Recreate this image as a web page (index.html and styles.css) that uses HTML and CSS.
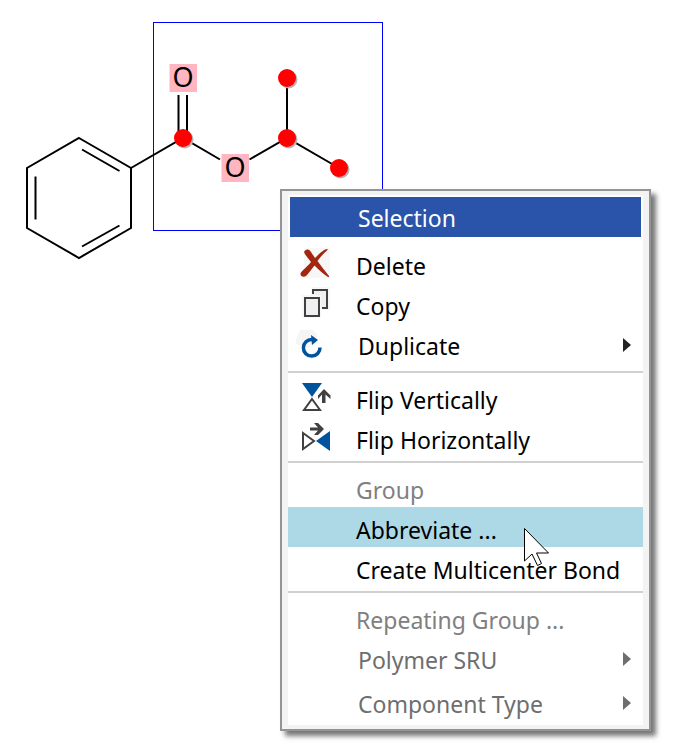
FILE: index.html
```html
<!DOCTYPE html>
<html lang="en">
<head>
<meta charset="utf-8">
<meta name="viewport" content="width=device-width, initial-scale=1">
<title>Structure editor</title>
<link rel="stylesheet" href="styles.css">
</head>
<body>
<main class="canvas">
  <svg class="molecule" width="400" height="270" viewBox="0 0 400 270" role="img" aria-label="Isopropyl benzoate with the ester group selected">
    <rect class="marquee" x="153.500" y="22.500" width="229" height="208"/>
    <g class="bonds">
      <path d="M79 138L131 168V228L79 258L27 228V168Z"/>
      <path d="M82 149.500L119.500 171M119.500 225.500L82 246.500M35.500 176.500V219.500"/>
      <path d="M131 168L183 138L220 159.500M249.500 159.500L287 138L339 168M287 138V78M178.500 95V138M187 95V138"/>
    </g>
    <g class="atom-box">
      <rect x="169.500" y="64" width="27.500" height="28"/>
      <rect x="221.500" y="154" width="27.500" height="28"/>
    </g>
    <g class="atom-label">
      <text x="183" y="87">O</text>
      <text x="235" y="177">O</text>
    </g>
    <g class="atom-shadow">
      <circle cx="184.500" cy="139.500" r="9"/><circle cx="288.500" cy="79.500" r="9"/>
      <circle cx="288.500" cy="139.500" r="9"/><circle cx="340.500" cy="169.500" r="9"/>
    </g>
    <g class="atom-dot">
      <circle cx="183" cy="138" r="9"/><circle cx="287" cy="78" r="9"/>
      <circle cx="287" cy="138" r="9"/><circle cx="339" cy="168" r="9"/>
    </g>
  </svg>

  <div class="menu" role="menu" aria-labelledby="menu-title">
    <div class="panel">
      <h1 class="title" id="menu-title">Selection</h1>
      <div class="group">
        <button class="item" role="menuitem" type="button">
          <svg class="icon" width="32" height="32" viewBox="1 0 32 32" aria-hidden="true"><path fill="#f7f7f7" d="M5 2H31V32H5Z"/><path fill="#a3260e" d="M5 6Q6 3 9 3.500C11 4 12 6 16 12C19 9 22 6 26 3.500L29 3L28 4.500C24 8 21 11.500 18.500 15C22 20 26 25 30 30V31H29C24 28 20 24 15.500 19.500C12 24 9 28 7 30C5 31.500 1 31 1.500 27.500C2 25.500 7 22 12 16C9 12 6 9 5 6Z"/></svg>
          <span class="label">Delete</span>
        </button>
        <button class="item" role="menuitem" type="button">
          <svg class="icon" width="32" height="32" viewBox="0 0 32 32" aria-hidden="true"><path fill="#f7f7f7" d="M2 9H11V1H30V24H21V32H2Z"/><path fill="#efeff2" d="M5 11H19V30H5ZM14 4H27V21H21V9H14Z"/><path fill="none" stroke="#404040" stroke-width="2" d="M5 12H19V30H5ZM13 8V4H27V22H22"/></svg>
          <span class="label">Copy</span>
        </button>
        <button class="item submenu" role="menuitem" aria-haspopup="menu" type="button">
          <svg class="icon" width="36" height="32" viewBox="-4 0 36 32" aria-hidden="true"><path fill="#f5f5f5" d="M0 4H13L17 8V12L9 22L-4 18L-5 16Z"/><path fill="none" stroke="#00539c" stroke-width="3.500" d="M12 13.500A8.300 8.300 0 1 0 20 21.500"/><path fill="#00539c" d="M11 9L18 14L12 19Z"/></svg>
          <span class="label">Duplicate</span>
          <svg class="arrow" width="8" height="14" viewBox="0 0 8 14" aria-hidden="true"><path d="M0 0L8 7L0 14Z"/></svg>
        </button>
      </div>
      <hr class="rule">
      <div class="group">
        <button class="item" role="menuitem" type="button">
          <svg class="icon" width="32" height="32" viewBox="0 -1 32 32" aria-hidden="true"><path fill="#00539c" d="M2 2H22L12 16Z"/><path fill="#fff" stroke="#404040" stroke-width="2" d="M12 18L20 29H4Z"/><path fill="#404040" d="M24 8L30.500 14.500V18L25.500 13.500V22H22V13.500L18 18V14.500Z"/></svg>
          <span class="label">Flip Vertically</span>
        </button>
        <button class="item" role="menuitem" type="button">
          <svg class="icon" width="32" height="32" viewBox="0 -1 32 32" aria-hidden="true"><path fill="#00539c" d="M30 10V30L16 20Z"/><path fill="#fff" stroke="#404040" stroke-width="2" d="M3 12L14 20L3 28Z"/><path fill="#404040" d="M18 2L24 8L18 14H14L18 9.500H10V6.500H18L14 2Z"/></svg>
          <span class="label">Flip Horizontally</span>
        </button>
      </div>
      <hr class="rule">
      <div class="group">
        <button class="item" role="menuitem" type="button" disabled><span class="label">Group</span></button>
        <button class="item active" role="menuitem" type="button"><span class="label">Abbreviate ...</span></button>
        <button class="item" role="menuitem" type="button"><span class="label">Create Multicenter Bond</span></button>
      </div>
      <hr class="rule">
      <div class="group">
        <button class="item" role="menuitem" type="button" disabled><span class="label">Repeating Group ...</span></button>
        <button class="item submenu" role="menuitem" aria-haspopup="menu" type="button" disabled>
          <span class="label">Polymer SRU</span>
          <svg class="arrow" width="8" height="14" viewBox="0 0 8 14" aria-hidden="true"><path d="M0 0L8 7L0 14Z"/></svg>
        </button>
        <button class="item submenu" role="menuitem" aria-haspopup="menu" type="button" disabled>
          <span class="label">Component Type</span>
          <svg class="arrow" width="8" height="14" viewBox="0 0 8 14" aria-hidden="true"><path d="M0 0L8 7L0 14Z"/></svg>
        </button>
      </div>
    </div>
  </div>

  <svg class="pointer" width="28" height="42" viewBox="0 0 28 42" aria-hidden="true"><path fill="#fff" stroke="#000" d="M1.500 1.500V34L9 27L14.500 38.500L18.500 36.500L13.500 26H25.500Z"/></svg>
</main>
</body>
</html>
```

FILE: styles.css
```css
* {
  box-sizing: border-box;
}

body {
  margin: 0;
  background: #fff;
  font-family: "Noto Sans", "Open Sans", sans-serif;
}

.canvas {
  position: relative;
  min-height: 100vh;
}

.molecule {
  display: block;
}

.marquee {
  fill: none;
  stroke: #00f;
}

.bonds {
  fill: none;
  stroke: #000;
  stroke-width: 2;
}

.atom-box {
  fill: #ffb6c1;
}

.atom-label {
  font-size: 27px;
  text-anchor: middle;
}

.atom-shadow {
  fill: #b4b4b4;
}

.atom-dot {
  fill: #f00;
}

.menu {
  position: absolute;
  top: 189px;
  left: 280px;
  min-width: 371px;
  padding: 4px 6px;
  border: 2px solid #949494;
  background: #f3f3f3;
  box-shadow: 5px 5px 5px #777;
}

.panel {
  background: #fff;
}

.title {
  height: 44px;
  margin: 0;
  padding-left: 68px;
  border: 2px solid #fff;
  background: #2a54aa;
  color: #fff;
  font-size: 23px;
  font-weight: 400;
  line-height: 42px;
}

.group {
  padding: 4px 0;
}

.group:last-child {
  padding-bottom: 0;
}

.item {
  display: grid;
  grid-template-columns: 68px 1fr auto;
  width: 100%;
  height: 40px;
  padding: 0;
  border: 0;
  background: none;
  color: #000;
  font: inherit;
  font-size: 23px;
  line-height: 40px;
  text-align: left;
  white-space: nowrap;
}

.item.active {
  background: #add8e6;
}

.item:disabled {
  color: #808080;
}

.submenu {
  grid-template-columns: 70px 1fr auto;
  height: 44px;
}

.submenu:disabled {
  color: #6e6e6e;
}

.label {
  grid-column: 2;
  padding-top: 3px;
}

.icon {
  margin: 3px 0 0 12px;
}

.submenu .icon {
  margin-left: 8px;
}

.arrow {
  margin: 15px 12px 0 0;
  fill: #222;
}

.submenu:disabled .arrow {
  fill: #6e6e6e;
}

.rule {
  height: 2px;
  margin: 0;
  border: 0;
  background: #d0d0d0;
}

.pointer {
  position: absolute;
  top: 527px;
  left: 523px;
}
```
